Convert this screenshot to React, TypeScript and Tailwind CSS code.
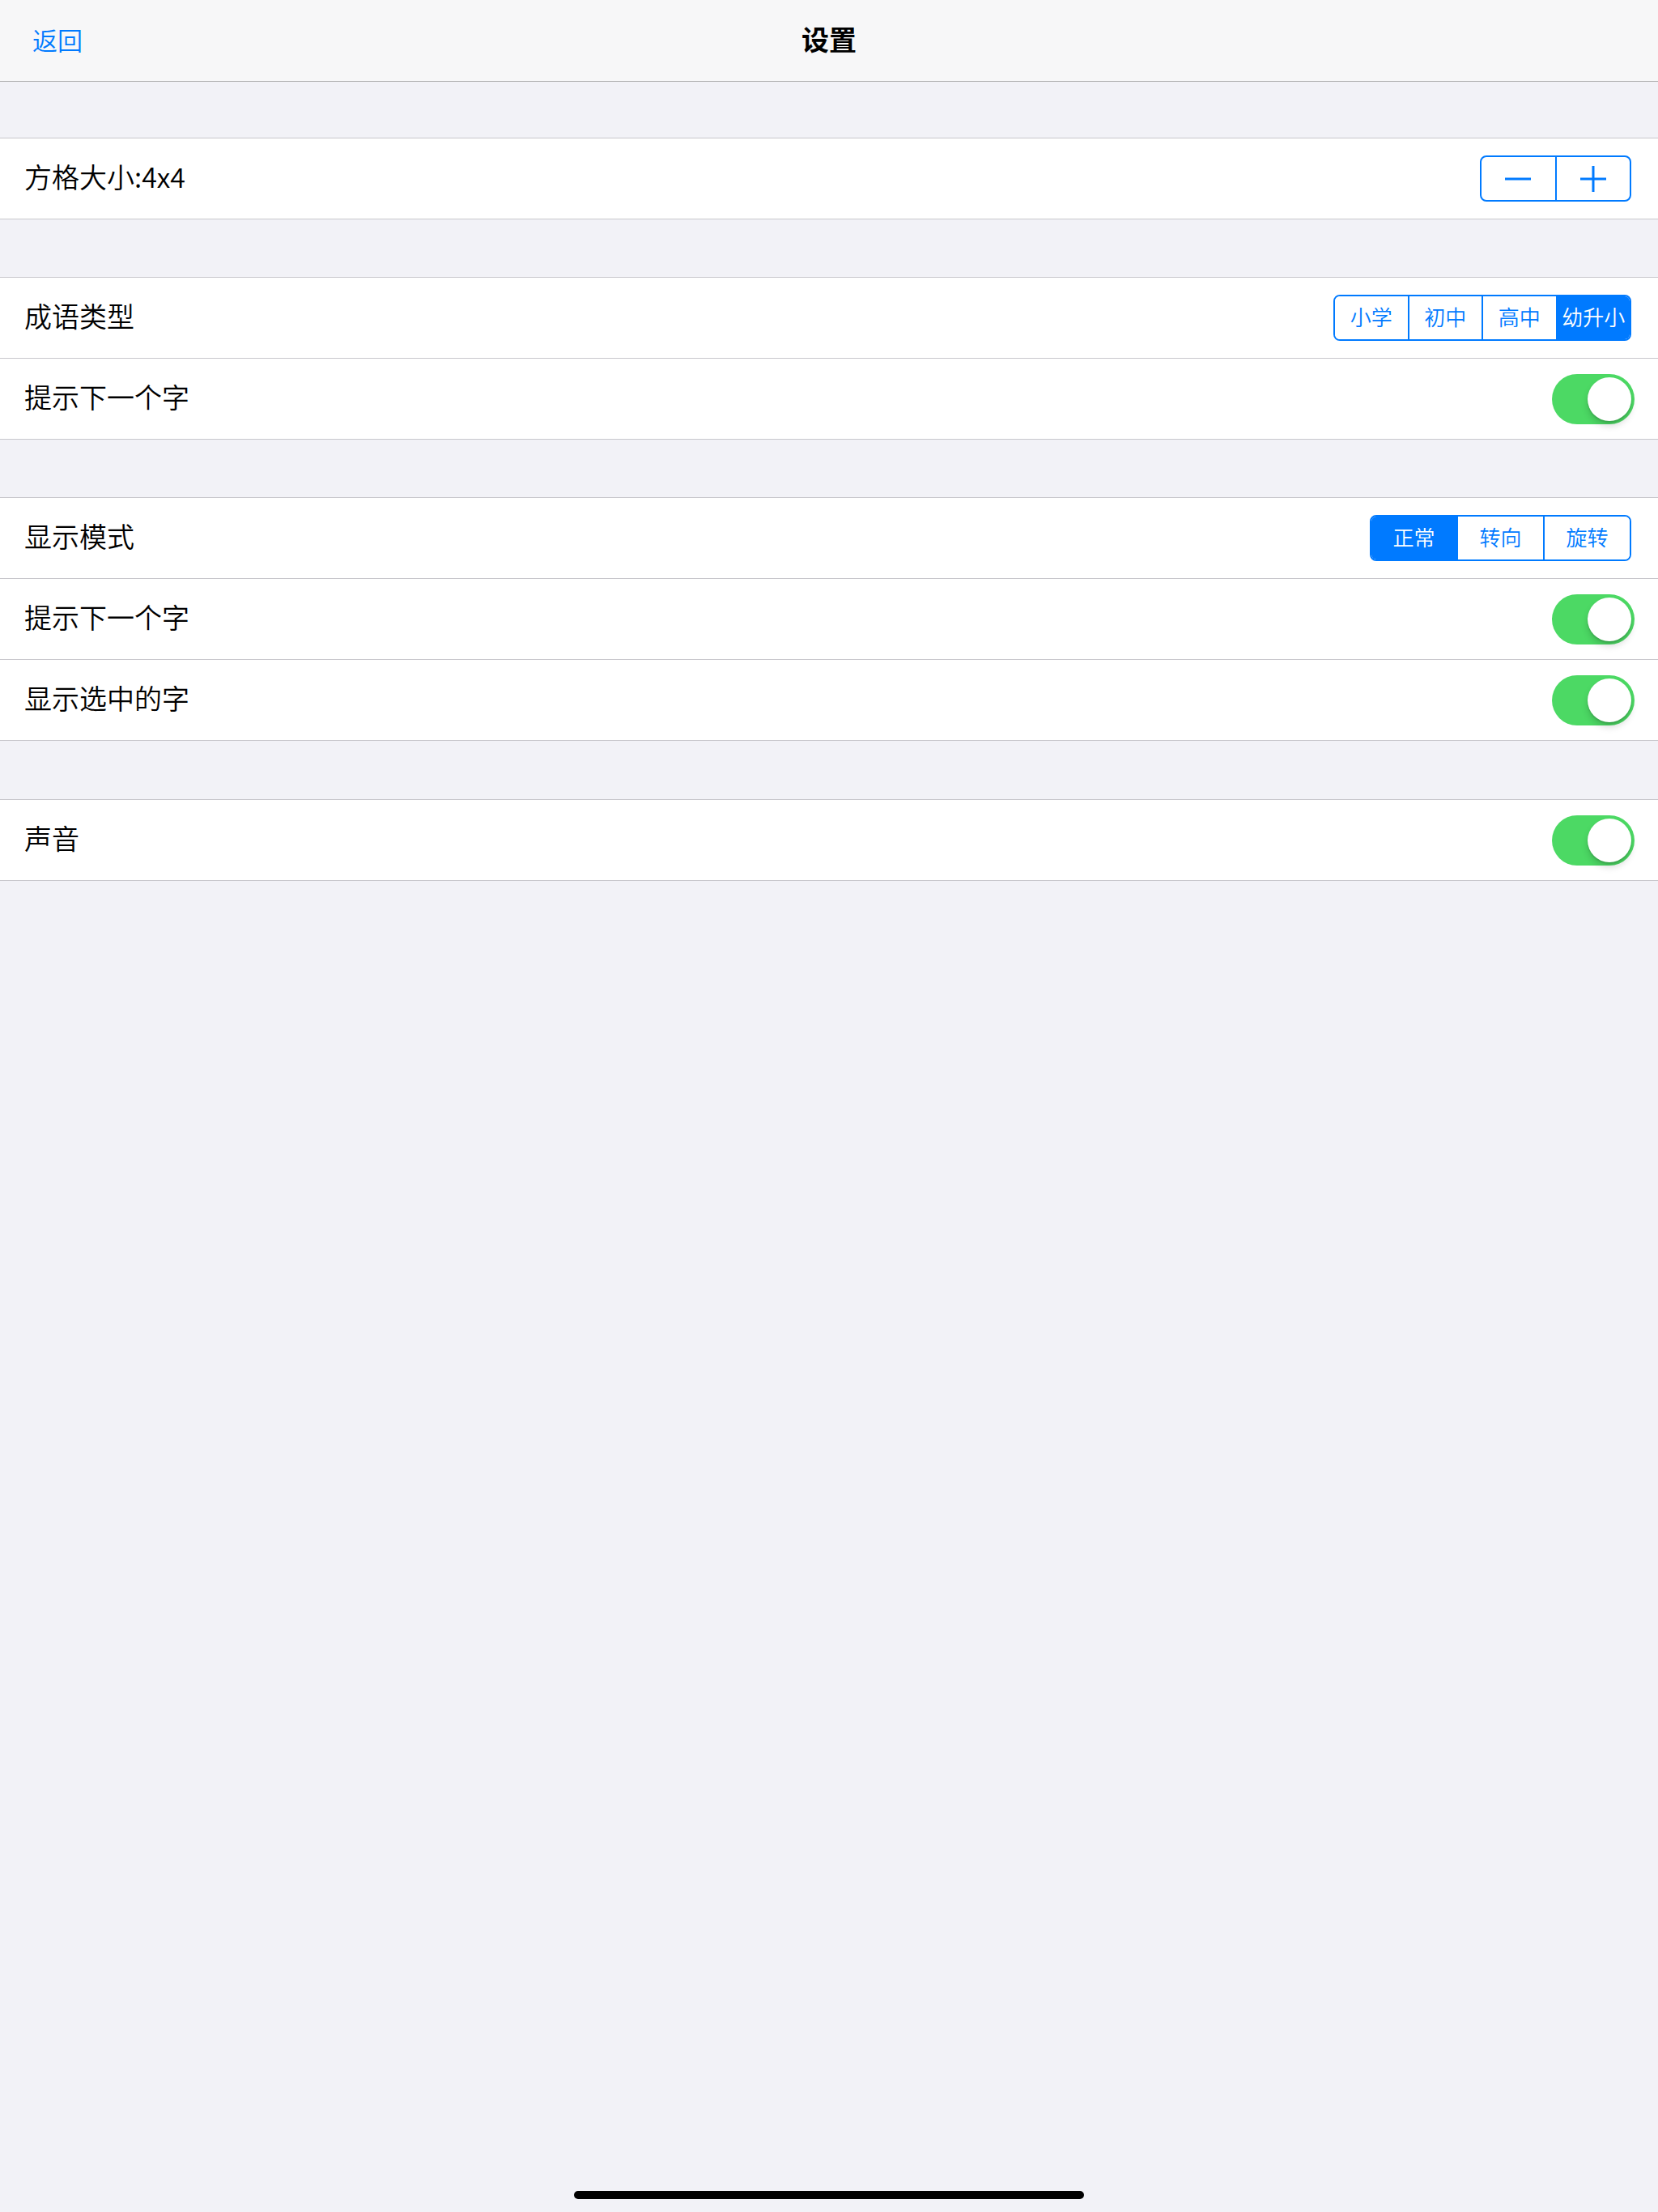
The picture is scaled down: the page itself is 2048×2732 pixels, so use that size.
import { useState } from "react";

const BLUE = "#007aff";

const Switch = ({ on, onChange }: { on: boolean; onChange: () => void }) => (
  <button
    onClick={onChange}
    className={`relative w-[102px] h-[62px] rounded-full transition-colors ${
      on ? "bg-[#4cd964]" : "bg-[#e5e5ea]"
    }`}
  >
    <span
      className={`absolute top-[4px] w-[54px] h-[54px] rounded-full bg-white shadow-[0_6px_8px_rgba(0,0,0,0.15),0_2px_2px_rgba(0,0,0,0.12)] transition-all ${
        on ? "left-[44px]" : "left-[4px]"
      }`}
    />
  </button>
);

const Segmented = ({
  items,
  selected,
  onSelect,
  width,
}: {
  items: string[];
  selected: number;
  onSelect: (i: number) => void;
  width: string;
}) => (
  <div
    className={`flex h-[57px] ${width} border-2 border-[#007aff] rounded-[8px] overflow-hidden mr-[4px]`}
  >
    {items.map((it, i) => (
      <button
        key={it}
        onClick={() => onSelect(i)}
        className={`flex-1 flex items-center justify-center text-[26px] font-[350] leading-none ${
          i > 0 ? "border-l-2 border-[#007aff]" : ""
        } ${i === selected ? "bg-[#007aff] text-white" : "bg-white text-[#007aff]"}`}
      >
        <span className="-translate-y-[2px]">{it}</span>
      </button>
    ))}
  </div>
);

const Row = ({
  label,
  children,
}: {
  label: string;
  children?: React.ReactNode;
}) => (
  <div className="h-[100px] flex items-center justify-between pl-[30px] pr-[29px] bg-white border-b border-[#c8c7cc]">
    <span className="text-[34px] font-[350] text-black leading-none -translate-y-[3px]">
      {label}
    </span>
    {children}
  </div>
);

const Section = ({ children, gap }: { children: React.ReactNode; gap: string }) => (
  <div className={`${gap} border-t border-[#c8c7cc]`}>{children}</div>
);

export default function App() {
  const [size, setSize] = useState(4);
  const [type, setType] = useState(3);
  const [mode, setMode] = useState(0);
  const [hint1, setHint1] = useState(true);
  const [hint2, setHint2] = useState(true);
  const [showSel, setShowSel] = useState(true);
  const [sound, setSound] = useState(true);

  return (
    <div
      className="min-h-[2732px] w-[2048px] flex flex-col bg-[#f2f2f7]"
      style={{ fontFamily: '"Noto Sans CJK SC", "Noto Sans", sans-serif' }}
    >
      <header className="relative h-[101px] bg-[#f7f7f8] border-b border-[#b2b2b2] flex items-center">
        <button
          className="ml-[40px] text-[31px] font-[350] leading-none -translate-y-[2px]"
          style={{ color: BLUE }}
        >
          返回
        </button>
        <h1 className="absolute left-1/2 -translate-x-1/2 -translate-y-[2px] text-[34px] font-semibold leading-none text-black">
          设置
        </h1>
      </header>

      <Section gap="mt-[69px]">
        <Row label={`方格大小:${size}x${size}`}>
          <div className="flex h-[57px] w-[187px] border-2 border-[#007aff] rounded-[8px] overflow-hidden mr-[4px]">
            <button
              onClick={() => setSize((s) => Math.max(3, s - 1))}
              className="flex-1 flex items-center justify-center"
            >
              <svg width="32" height="32" viewBox="0 0 32 32">
                <rect x="0" y="14.5" width="32" height="3" fill={BLUE} />
              </svg>
            </button>
            <button
              onClick={() => setSize((s) => s + 1)}
              className="flex-1 flex items-center justify-center border-l-2 border-[#007aff]"
            >
              <svg width="32" height="32" viewBox="0 0 32 32">
                <rect x="0" y="14.5" width="32" height="3" fill={BLUE} />
                <rect x="14.5" y="0" width="3" height="32" fill={BLUE} />
              </svg>
            </button>
          </div>
        </Row>
      </Section>

      <Section gap="mt-[71px]">
        <Row label="成语类型">
          <Segmented
            items={["小学", "初中", "高中", "幼升小"]}
            selected={type}
            onSelect={setType}
            width="w-[368px]"
          />
        </Row>
        <Row label="提示下一个字">
          <Switch on={hint1} onChange={() => setHint1(!hint1)} />
        </Row>
      </Section>

      <Section gap="mt-[71px]">
        <Row label="显示模式">
          <Segmented
            items={["正常", "转向", "旋转"]}
            selected={mode}
            onSelect={setMode}
            width="w-[323px]"
          />
        </Row>
        <Row label="提示下一个字">
          <Switch on={hint2} onChange={() => setHint2(!hint2)} />
        </Row>
        <Row label="显示选中的字">
          <Switch on={showSel} onChange={() => setShowSel(!showSel)} />
        </Row>
      </Section>

      <Section gap="mt-[72px]">
        <Row label="声音">
          <Switch on={sound} onChange={() => setSound(!sound)} />
        </Row>
      </Section>

      <div className="flex-1" />
      <div className="flex justify-center pb-[16px]">
        <div className="w-[630px] h-[10px] rounded-full bg-black" />
      </div>
    </div>
  );
}
